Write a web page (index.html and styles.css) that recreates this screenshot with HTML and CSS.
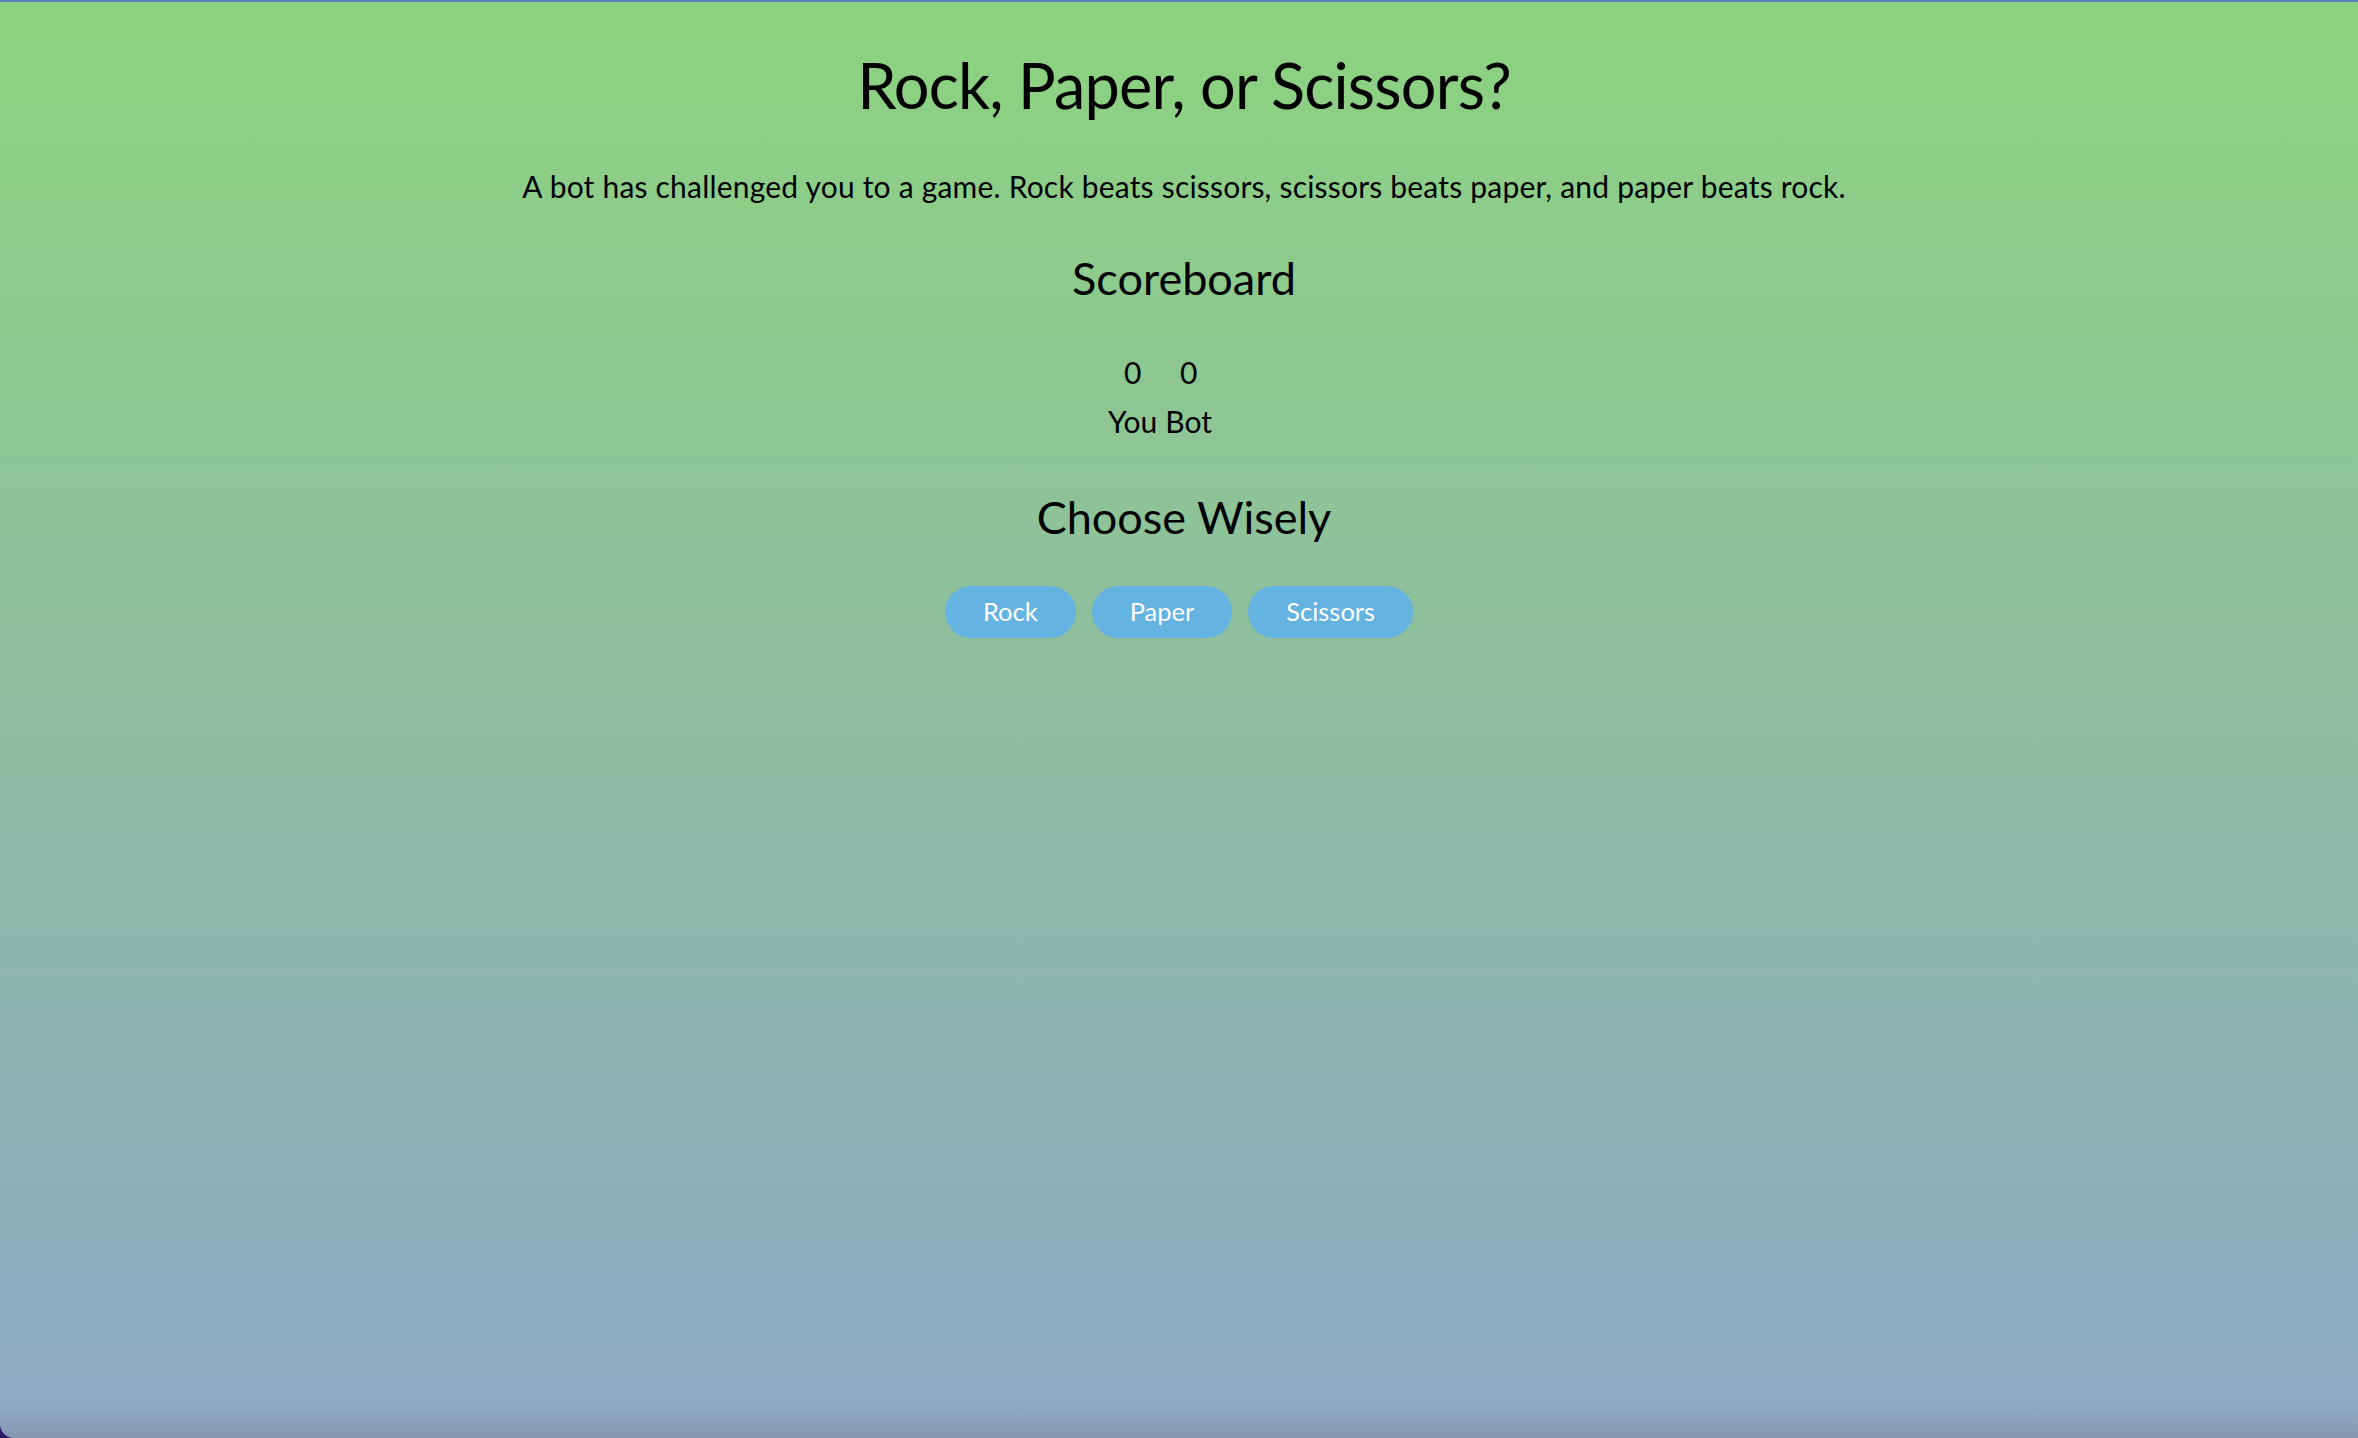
FILE: index.html
```html
<!DOCTYPE html>
<html lang="en">
<head>
<meta charset="utf-8">
<title>Rock, Paper, or Scissors?</title>
<link rel="stylesheet" href="styles.css">
</head>
<body>
<main class="game">
  <h1 class="title">Rock, Paper, or Scissors?</h1>
  <p class="intro">A bot has challenged you to a game. Rock beats scissors, scissors beats paper, and paper beats rock.</p>
  <h2 class="section-title">Scoreboard</h2>
  <div class="scoreboard">
    <span class="score">0</span>
    <span class="score">0</span>
    <span class="label">You</span>
    <span class="label">Bot</span>
  </div>
  <h2 class="section-title choose">Choose Wisely</h2>
  <div class="choices">
    <button class="choice">Rock</button>
    <button class="choice">Paper</button>
    <button class="choice">Scissors</button>
  </div>
</main>
<div class="corner"></div>
</body>
</html>
```

FILE: styles.css
```css
html, body {
  height: 100%;
}
body {
  margin: 0;
  border-top: 2px solid #5b7fbe;
  box-sizing: border-box;
  background: linear-gradient(to bottom, #8cd37f 0%, #8fbca2 50%, #8fabc4 97.5%, #8598b0 100%);
  font-family: Lato, "Source Sans Pro", "Noto Sans", sans-serif;
  color: #000;
  position: relative;
  overflow: hidden;
}
.game {
  display: flex;
  flex-direction: column;
  align-items: center;
  text-align: center;
  padding-top: 45px;
}
.title {
  margin: 0;
  padding-left: 10px;
  font-size: 63px;
  letter-spacing: -0.8px;
  line-height: 1.2;
  font-weight: 400;
}
.intro {
  margin: 45px 0 0;
  padding-left: 10px;
  font-size: 30px;
  letter-spacing: 0.2px;
  line-height: 1.2;
}
.section-title {
  margin: 47px 0 0;
  padding-left: 10px;
  font-size: 45px;
  line-height: 1.2;
  font-weight: 400;
}
.scoreboard {
  margin: 43px 38px 0 0;
  display: grid;
  grid-template-columns: auto auto;
  column-gap: 8px;
  font-size: 30px;
  line-height: 49px;
}
.score, .label {
  text-align: center;
}
.section-title.choose {
  margin-top: 44px;
}
.choices {
  margin-top: 42px;
  display: flex;
  gap: 16px;
}
.choice {
  font-family: inherit;
  font-size: 25.5px;
  line-height: 1.2;
  color: #fff;
  background: #64b3e0;
  border: none;
  border-radius: 26px;
  padding: 0 38px;
  height: 52px;
}
.corner {
  position: absolute;
  left: 0;
  bottom: 0;
  width: 14px;
  height: 14px;
  background: radial-gradient(circle at 100% 0, transparent 13.5px, #2a1768 14.5px);
}
```
